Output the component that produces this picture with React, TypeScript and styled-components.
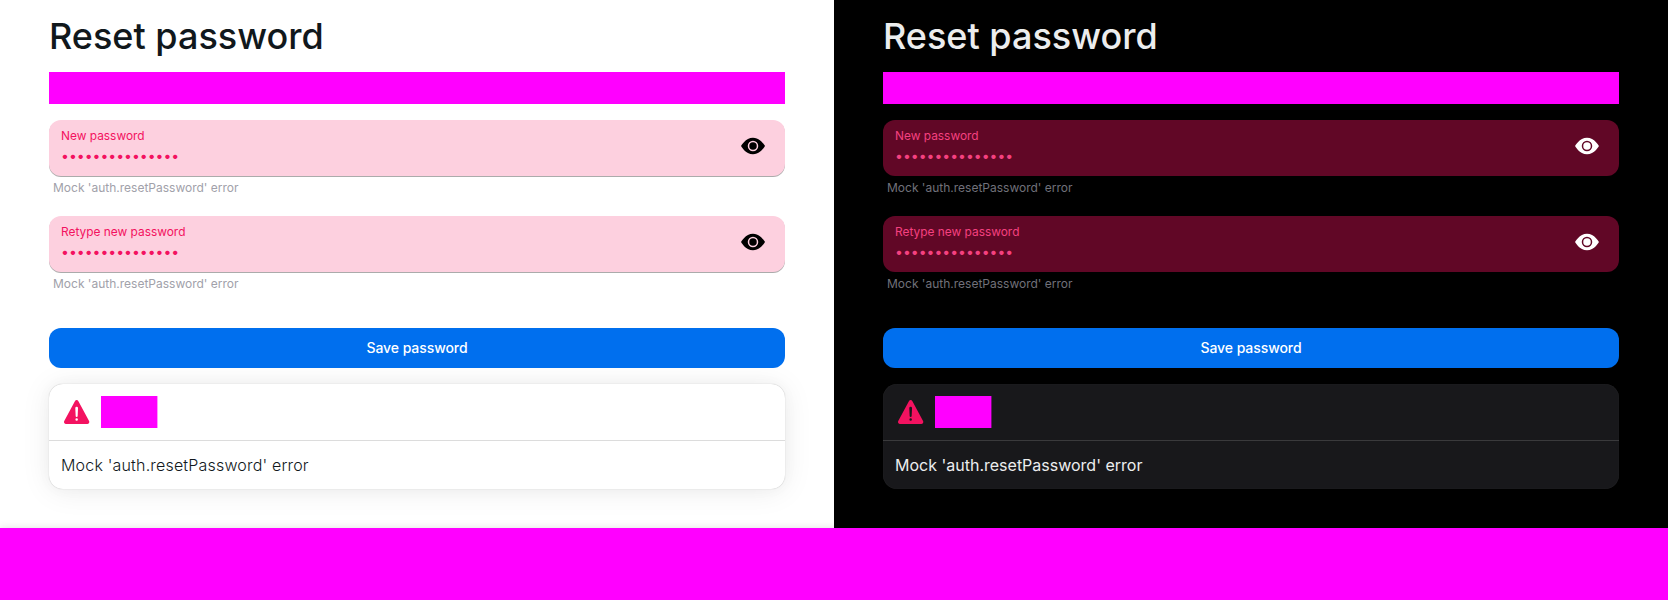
import React from "react";
import styled, { createGlobalStyle, ThemeProvider } from "styled-components";
import { BsEyeFill } from "react-icons/bs";
import { IoWarning } from "react-icons/io5";

const light = {
  background: "#ffffff",
  foreground: "#11181c",
  field: "#fdd0df",
  fieldShadow: "0 1px 0 0 rgba(0, 0, 0, 0.33)",
  danger: "#f31260",
  helper: "#a1a1aa",
  icon: "#000000",
  card: "#ffffff",
  cardShadow:
    "0 0 15px 0 rgba(0, 0, 0, 0.03), 0 2px 30px 0 rgba(0, 0, 0, 0.08), 0 0 1px 0 rgba(0, 0, 0, 0.3)",
  divider: "rgba(17, 17, 17, 0.15)",
  bodyWeight: 300,
  bodySpacing: "0.18px",
};

const dark: typeof light = {
  background: "#000000",
  foreground: "#ecedee",
  field: "#610726",
  fieldShadow: "none",
  danger: "#f54180",
  helper: "#71717a",
  icon: "#ffffff",
  card: "#18181b",
  cardShadow: "inset 0 0 1px 0 rgba(255, 255, 255, 0.15)",
  divider: "rgba(255, 255, 255, 0.15)",
  bodyWeight: 400,
  bodySpacing: "0",
};

const GlobalStyle = createGlobalStyle`
  *, *::before, *::after { box-sizing: border-box; }
  body {
    margin: 0;
    font-family: Inter, "Liberation Sans", sans-serif;
    -webkit-font-smoothing: antialiased;
  }
`;

const Page = styled.div`
  display: flex;
  flex-direction: column;
  width: 1668px;
  height: 600px;
  overflow: hidden;
`;

const Panels = styled.div`
  display: grid;
  grid-template-columns: 1fr 1fr;
  height: 528px;
`;

const Panel = styled.main`
  padding: 16px 49px 0;
  background: ${({ theme }) => theme.background};
  color: ${({ theme }) => theme.foreground};
  overflow: hidden;
`;

const Title = styled.h1`
  margin: 0 0 16px;
  font-size: 36px;
  line-height: 40px;
  font-weight: 500;
`;

const Mask = styled.div`
  height: 32px;
  background: #ff00ff;
`;

const TitleMask = styled(Mask)`
  width: 57px;
  background: linear-gradient(to right, #ff00ff 56px, rgba(255, 0, 255, 0.4) 56px);
`;

const Form = styled.form`
  display: flex;
  flex-direction: column;
  margin: 16px 0;
`;

const FieldGroup = styled.div`
  height: 96px;
`;

const FieldBox = styled.div`
  display: flex;
  align-items: center;
  justify-content: space-between;
  height: 56px;
  padding: 8px 12px;
  border-radius: 12px;
  background: ${({ theme }) => theme.field};
  box-shadow: ${({ theme }) => theme.fieldShadow};
`;

const FieldText = styled.label`
  display: flex;
  flex-direction: column;
  flex: 1;
  height: 40px;
  color: ${({ theme }) => theme.danger};
  font-size: 11.9px;
  line-height: 16px;
`;

const Input = styled.input`
  width: 100%;
  height: 20px;
  margin-top: 2px;
  padding: 0;
  border: 0;
  outline: 0;
  background: transparent;
  color: inherit;
  font-family: inherit;
  font-size: 14px;
  line-height: 20px;
`;

const RevealButton = styled.button`
  display: flex;
  margin: 0 8px 4px;
  padding: 0;
  border: 0;
  background: transparent;
  color: ${({ theme }) => theme.icon};
  font-size: 24px;
`;

const Helper = styled.div`
  padding: 4px;
  color: ${({ theme }) => theme.helper};
  font-size: 12px;
  line-height: 16px;
`;

const SaveButton = styled.button`
  height: 40px;
  margin-top: 16px;
  border: 0;
  border-radius: 12px;
  background: #006fee;
  color: #ffffff;
  font-family: inherit;
  font-size: 14px;
  font-weight: 500;
  line-height: 20px;
  letter-spacing: -0.07px;
`;

const Card = styled.section`
  border-radius: 14px;
  background: ${({ theme }) => theme.card};
  box-shadow: ${({ theme }) => theme.cardShadow};
`;

const CardHeader = styled.header`
  display: flex;
  align-items: center;
  gap: 8px;
  padding: 12px;
  color: #f31260;
`;

const Divider = styled.hr`
  height: 1px;
  margin: 0;
  border: 0;
  background: ${({ theme }) => theme.divider};
`;

const CardBody = styled.p`
  margin: 0;
  padding: 12px;
  font-size: 16px;
  font-weight: ${({ theme }) => theme.bodyWeight};
  letter-spacing: ${({ theme }) => theme.bodySpacing};
  line-height: 24px;
`;

const Footer = styled.footer`
  position: relative;
  height: 72px;
  background: #ff00ff;
  box-shadow: 0 0 8px rgba(0, 0, 0, 0.12);
`;

const ERROR = "Mock 'auth.resetPassword' error";

function PasswordField({ label }: { label: string }) {
  return (
    <FieldGroup>
      <FieldBox>
        <FieldText>
          {label}
          <Input type="password" defaultValue="strong-password" />
        </FieldText>
        <RevealButton type="button">
          <BsEyeFill />
        </RevealButton>
      </FieldBox>
      <Helper>{ERROR}</Helper>
    </FieldGroup>
  );
}

function ResetPassword({ theme }: { theme: typeof light }) {
  return (
    <ThemeProvider theme={theme}>
      <Panel>
        <Title>Reset password</Title>
        <Mask />
        <Form>
          <PasswordField label="New password" />
          <PasswordField label="Retype new password" />
          <SaveButton type="button">Save password</SaveButton>
        </Form>
        <Card>
          <CardHeader>
            <IoWarning size={32} />
            <TitleMask />
          </CardHeader>
          <Divider />
          <CardBody>{ERROR}</CardBody>
        </Card>
      </Panel>
    </ThemeProvider>
  );
}

export default function App() {
  return (
    <Page>
      <GlobalStyle />
      <Panels>
        <ResetPassword theme={light} />
        <ResetPassword theme={dark} />
      </Panels>
      <Footer />
    </Page>
  );
}
